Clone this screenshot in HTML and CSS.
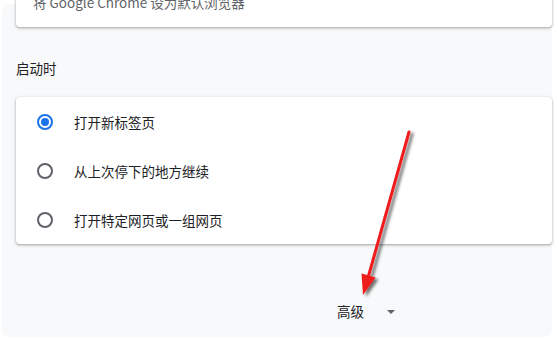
FILE: index.html
```html
<!DOCTYPE html>
<html lang="zh-CN">
<head>
<meta charset="utf-8">
<link rel="stylesheet" href="styles.css">
</head>
<body>
<div class="panel">
  <div class="card top-card">
    <div class="top-text">将 Google Chrome 设为默认浏览器</div>
  </div>
  <div class="heading">启动时</div>
  <div class="card options">
    <div class="row"><span class="radio checked"></span><span class="label">打开新标签页</span></div>
    <div class="row"><span class="radio"></span><span class="label">从上次停下的地方继续</span></div>
    <div class="row"><span class="radio"></span><span class="label">打开特定网页或一组网页</span></div>
  </div>
  <div class="advanced">
    <span class="adv-label">高级</span>
    <span class="caret"></span>
  </div>
</div>
<svg class="arrow" width="559" height="339" viewBox="0 0 559 339">
  <defs>
    <filter id="sh" x="-50%" y="-50%" width="200%" height="200%">
      <feDropShadow dx="3" dy="2" stdDeviation="1.6" flood-color="#000" flood-opacity="0.55"/>
    </filter>
  </defs>
  <g filter="url(#sh)">
    <line x1="409" y1="132" x2="368.5" y2="276" stroke="#ee1b1b" stroke-width="3" stroke-linecap="round"/>
    <polygon points="363,295 361.5,273.5 375.5,277.5" fill="#ee1b1b"/>
  </g>
</svg>
</body>
</html>
```
FILE: styles.css
```css
html, body {
  margin: 0;
  padding: 0;
  background: #ffffff;
  width: 559px;
  height: 339px;
  overflow: hidden;
  font-family: "Noto Sans CJK SC", "Noto Sans", Roboto, sans-serif;
  color: #202124;
}

.panel {
  margin: 4px 0 0 2px;
  width: 550px;
  height: 333px;
  box-sizing: border-box;
  background: #f8f9fa;
  border-radius: 7px;
  padding: 0 0 0 14px;
  display: flex;
  flex-direction: column;
}

.card {
  background: #ffffff;
  border-radius: 4px;
  box-shadow: 0 1px 2px rgba(60, 64, 67, 0.3), 0 1px 3px 1px rgba(60, 64, 67, 0.15);
}

.top-card {
  margin-top: -14px;
  height: 37px;
  box-sizing: border-box;
  padding: 3px 17px 0;
}

.top-text {
  font-size: 13.5px;
  line-height: 18px;
  color: #5f6368;
}

.heading {
  margin-top: 31px;
  font-size: 13.5px;
  line-height: 20px;
  color: #202124;
}

.options {
  margin-top: 19px;
  padding: 0;
}

.row {
  height: 49px;
  display: flex;
  align-items: center;
  padding-left: 21px;
}

.radio {
  width: 16px;
  height: 16px;
  box-sizing: border-box;
  border: 2px solid #5f6368;
  border-radius: 50%;
  display: flex;
  align-items: center;
  justify-content: center;
}

.radio.checked {
  border-color: #1a73e8;
}

.radio.checked::after {
  content: "";
  width: 8px;
  height: 8px;
  border-radius: 50%;
  background: #1a73e8;
}

.label {
  margin-left: 21px;
  font-size: 13.5px;
  line-height: 20px;
  color: #202124;
}

.advanced {
  margin-top: 57px;
  padding-left: 321px;
  display: flex;
  align-items: center;
  height: 20px;
}

.adv-label {
  font-size: 13.5px;
  line-height: 20px;
  color: #202124;
}

.caret {
  margin-left: 23px;
  width: 0;
  height: 0;
  border-left: 4px solid transparent;
  border-right: 4px solid transparent;
  border-top: 4px solid #5f6368;
  margin-top: 2px;
}

.arrow {
  position: absolute;
  left: 0;
  top: 0;
  pointer-events: none;
}
```
